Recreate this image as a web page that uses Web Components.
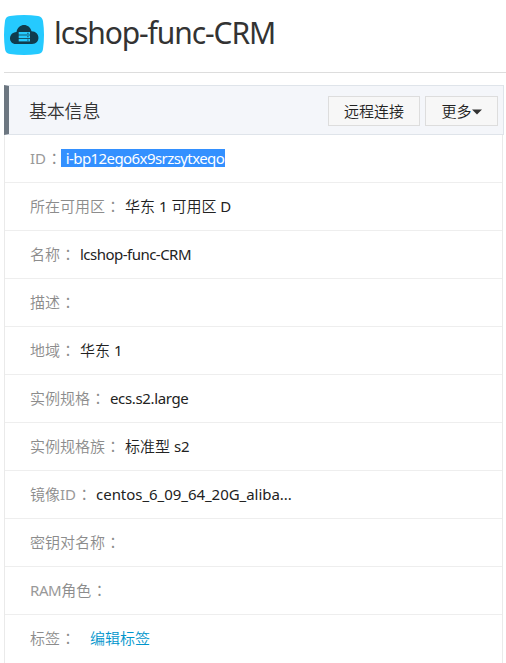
<!DOCTYPE html>
<html lang="zh-CN">
<head>
<meta charset="utf-8">
<title>lcshop-func-CRM</title>
<style>
html { height: 663px; overflow: hidden; background: #fff; }
body { margin: 0; font-family: "Noto Sans", "Noto Sans CJK SC", sans-serif; color: #333; font-size: 15px; }
</style>
</head>
<body>
<instance-page></instance-page>
<script>
function define(name, html) {
  const t = document.createElement('template');
  t.innerHTML = html.trim();
  customElements.define(name, class extends HTMLElement {
    constructor() {
      super();
      this.attachShadow({ mode: 'open' }).append(t.content.cloneNode(true));
    }
  });
}

define('cloud-icon', `
<style>:host{display:block;width:40px;height:40px}svg{display:block}</style>
<svg width="40" height="40" viewBox="0 0 40 40">
  <path d="M6 1Q20-1 34 1Q38 1.500 39 6Q41 20 39 34Q38.500 38.500 34 39Q20 41 6 39Q1.500 38.500 1 34Q-1 20 1 6Q1.500 1.500 6 1Z" fill="#25caff"/>
  <path d="M12 29C4 29 4 17.300 12.500 16.900C14 8 25.500 7.500 27.500 16.300C36.500 16.500 37 29 28 29Z" fill="#103b4d"/>
  <g fill="#25caff"><rect x="14.700" y="17" width="11.300" height="2.600"/><rect x="14.700" y="20.400" width="11.300" height="2.600"/><rect x="14.700" y="23.800" width="11.300" height="2.600"/></g>
  <g fill="#103b4d"><rect x="23.300" y="17.800" width="1.200" height="1"/><rect x="23.300" y="21.200" width="1.200" height="1"/><rect x="23.300" y="24.600" width="1.200" height="1"/></g>
</svg>`);

define('page-title', `
<style>
:host{display:flex;align-items:flex-start;gap:10px;height:72px;margin-left:4px;border-bottom:1px solid #ddd}
cloud-icon{margin-top:15px}
h1{margin:12px 0 0;font-size:30px;line-height:42px;font-weight:400;letter-spacing:-1.1px;white-space:nowrap}
</style>
<cloud-icon></cloud-icon><h1><slot></slot></h1>`);

define('tool-button', `
<style>
:host{display:block}
button{display:flex;align-items:center;justify-content:center;width:100%;height:30px;padding:0;margin:0;box-sizing:border-box;border:1px solid #ddd;background:#f7f7f7;color:#222;font:inherit;line-height:28px}
</style><button><slot></slot></button>`);

define('caret-down', `
<style>:host{display:block;width:10px;height:6px;margin-top:3px}svg{display:block}</style>
<svg width="10" height="6"><path d="M0 .5H10L5 5.500Z" fill="#333"/></svg>`);

define('info-row', `
<style>
:host{display:flex;align-items:center;box-sizing:border-box;height:48px;padding:0 0 2px 25px;border-bottom:1px solid #eee;white-space:nowrap;line-height:18px}
:host(:last-of-type){border-bottom-color:transparent}
.label,.colon{color:#8c8c8c}
.colon{box-sizing:border-box;width:15px;padding:1px 0 0 .6px;font-family:"Noto Sans CJK JP",sans-serif}
.value{color:#222;margin-left:var(--gap,5px)}
</style>
<span class="label"><slot name="label"></slot></span><span class="colon">：</span><span class="value"><slot></slot></span>`);

define('selected-text', `
<style>:host{display:block;background:#3390ff;color:#fff;height:18px;padding-left:4.500px;width:159.500px}</style><slot></slot>`);

define('info-panel', `
<style>
:host{display:block;margin:12px 2px 0 4px;font-weight:350}
header{display:flex;align-items:center;box-sizing:border-box;height:50px;padding:1px 5px 0 20px;background:#f4f6fa;border:1px solid #dfe4ea;border-left:5px solid #6d7781}
h2{flex:1;margin:0;font-size:18px;font-weight:inherit;letter-spacing:-.2px;line-height:24px}
.actions{display:flex;gap:5px}
.body{height:529px;margin-right:1px;border:solid #eaeaea;border-width:0 1px;overflow:hidden}
</style>
<header><h2><slot name="heading"></slot></h2><div class="actions"><slot name="actions"></slot></div></header>
<div class="body"><slot></slot></div>`);

define('instance-page', `
<style>
:host{display:block;width:506px;height:663px;overflow:hidden}
tool-button{width:92px}
.more{width:73px}
.sel{--gap:0.2px}
.tag{--gap:15px}
.latin{font-weight:400}
.muted{color:#999}
.id{letter-spacing:-.58px}
.name{letter-spacing:-.52px}
.spec{letter-spacing:-.36px}
.image{letter-spacing:-.04px}
.ram{letter-spacing:-.4px}
a{color:#0095cc;text-decoration:none}
</style>
<page-title>lcshop-func-CRM</page-title>
<info-panel>
  <span slot="heading">基本信息</span>
  <tool-button slot="actions">远程连接</tool-button>
  <tool-button slot="actions" class="more">更多<caret-down></caret-down></tool-button>
  <info-row class="sel"><span slot="label" class="latin muted">ID</span><selected-text><span class="latin id">i-bp12ego6x9srzsytxeqo</span></selected-text></info-row>
  <info-row><span slot="label">所在可用区</span>华东 <span class="latin">1</span> 可用区 <span class="latin">D</span></info-row>
  <info-row><span slot="label">名称</span><span class="latin name">lcshop-func-CRM</span></info-row>
  <info-row><span slot="label">描述</span></info-row>
  <info-row><span slot="label">地域</span>华东 <span class="latin">1</span></info-row>
  <info-row><span slot="label">实例规格</span><span class="latin spec">ecs.s2.large</span></info-row>
  <info-row><span slot="label">实例规格族</span>标准型 <span class="latin">s2</span></info-row>
  <info-row><span slot="label">镜像<span class="latin muted">ID</span></span><span class="latin image">centos_6_09_64_20G_aliba...</span></info-row>
  <info-row><span slot="label">密钥对名称</span></info-row>
  <info-row><span slot="label"><span class="latin muted ram">RAM</span>角色</span></info-row>
  <info-row class="tag"><span slot="label">标签</span><a>编辑标签</a></info-row>
</info-panel>`);
</script>
</body>
</html>
